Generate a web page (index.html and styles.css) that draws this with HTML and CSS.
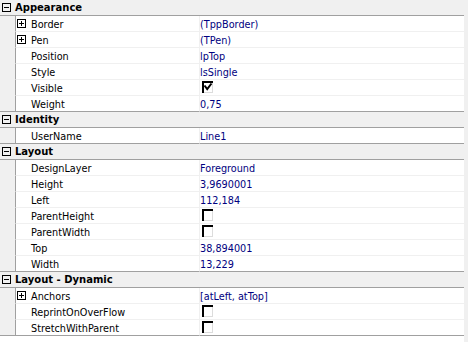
FILE: index.html
```html
<!DOCTYPE html>
<html>

<head>
    <title>Object Inspector</title>
    <link rel="stylesheet" href="styles.css">
</head>

<body>
    <div class="inspector">
        <div class="grid">
            <div class="category">
                <span class="toggle"><svg width="9" height="9"><rect x="0.5" y="0.5" width="8" height="8" fill="none" stroke="#000"/><path d="M2 4.5h5" stroke="#000"/></svg></span>
                Appearance
            </div>
            <div class="prop">
                <div class="gutter"></div>
                <div class="name"><span class="exp"><svg width="9" height="9"><rect x="0.5" y="0.5" width="8" height="8" fill="none" stroke="#000"/><path d="M2 4.5h5M4.5 2v5" stroke="#000"/></svg></span>Border</div>
                <div class="value">(TppBorder)</div>
            </div>
            <div class="prop">
                <div class="gutter"></div>
                <div class="name"><span class="exp"><svg width="9" height="9"><rect x="0.5" y="0.5" width="8" height="8" fill="none" stroke="#000"/><path d="M2 4.5h5M4.5 2v5" stroke="#000"/></svg></span>Pen</div>
                <div class="value">(TPen)</div>
            </div>
            <div class="prop">
                <div class="gutter"></div>
                <div class="name"><span class="exp"></span>Position</div>
                <div class="value">lpTop</div>
            </div>
            <div class="prop">
                <div class="gutter"></div>
                <div class="name"><span class="exp"></span>Style</div>
                <div class="value">lsSingle</div>
            </div>
            <div class="prop">
                <div class="gutter"></div>
                <div class="name"><span class="exp"></span>Visible</div>
                <div class="value"><svg class="check" width="11" height="12"><rect width="11" height="2"/><rect width="2" height="12"/><rect x="10" y="2" width="1" height="10" fill="#dcdcdc"/><rect x="2" y="11" width="9" height="1" fill="#dcdcdc"/><polyline points="2.5,4.5 5.2,8 9.5,2.5" fill="none" stroke="#000" stroke-width="2"/></svg></div>
            </div>
            <div class="prop last">
                <div class="gutter"></div>
                <div class="name"><span class="exp"></span>Weight</div>
                <div class="value">0,75</div>
            </div>

            <div class="category">
                <span class="toggle"><svg width="9" height="9"><rect x="0.5" y="0.5" width="8" height="8" fill="none" stroke="#000"/><path d="M2 4.5h5" stroke="#000"/></svg></span>
                Identity
            </div>
            <div class="prop last">
                <div class="gutter"></div>
                <div class="name"><span class="exp"></span>UserName</div>
                <div class="value">Line1</div>
            </div>

            <div class="category">
                <span class="toggle"><svg width="9" height="9"><rect x="0.5" y="0.5" width="8" height="8" fill="none" stroke="#000"/><path d="M2 4.5h5" stroke="#000"/></svg></span>
                Layout
            </div>
            <div class="prop">
                <div class="gutter"></div>
                <div class="name"><span class="exp"></span>DesignLayer</div>
                <div class="value">Foreground</div>
            </div>
            <div class="prop">
                <div class="gutter"></div>
                <div class="name"><span class="exp"></span>Height</div>
                <div class="value">3,9690001</div>
            </div>
            <div class="prop">
                <div class="gutter"></div>
                <div class="name"><span class="exp"></span>Left</div>
                <div class="value">112,184</div>
            </div>
            <div class="prop">
                <div class="gutter"></div>
                <div class="name"><span class="exp"></span>ParentHeight</div>
                <div class="value"><svg class="check" width="11" height="12"><rect width="11" height="2"/><rect width="2" height="12"/><rect x="10" y="2" width="1" height="10" fill="#dcdcdc"/><rect x="2" y="11" width="9" height="1" fill="#dcdcdc"/></svg></div>
            </div>
            <div class="prop">
                <div class="gutter"></div>
                <div class="name"><span class="exp"></span>ParentWidth</div>
                <div class="value"><svg class="check" width="11" height="12"><rect width="11" height="2"/><rect width="2" height="12"/><rect x="10" y="2" width="1" height="10" fill="#dcdcdc"/><rect x="2" y="11" width="9" height="1" fill="#dcdcdc"/></svg></div>
            </div>
            <div class="prop">
                <div class="gutter"></div>
                <div class="name"><span class="exp"></span>Top</div>
                <div class="value">38,894001</div>
            </div>
            <div class="prop last">
                <div class="gutter"></div>
                <div class="name"><span class="exp"></span>Width</div>
                <div class="value">13,229</div>
            </div>

            <div class="category">
                <span class="toggle"><svg width="9" height="9"><rect x="0.5" y="0.5" width="8" height="8" fill="none" stroke="#000"/><path d="M2 4.5h5" stroke="#000"/></svg></span>
                Layout - Dynamic
            </div>
            <div class="prop">
                <div class="gutter"></div>
                <div class="name"><span class="exp"><svg width="9" height="9"><rect x="0.5" y="0.5" width="8" height="8" fill="none" stroke="#000"/><path d="M2 4.5h5M4.5 2v5" stroke="#000"/></svg></span>Anchors</div>
                <div class="value">[atLeft, atTop]</div>
            </div>
            <div class="prop">
                <div class="gutter"></div>
                <div class="name"><span class="exp"></span>ReprintOnOverFlow</div>
                <div class="value"><svg class="check" width="11" height="12"><rect width="11" height="2"/><rect width="2" height="12"/><rect x="10" y="2" width="1" height="10" fill="#dcdcdc"/><rect x="2" y="11" width="9" height="1" fill="#dcdcdc"/></svg></div>
            </div>
            <div class="prop last">
                <div class="gutter"></div>
                <div class="name"><span class="exp"></span>StretchWithParent</div>
                <div class="value"><svg class="check" width="11" height="12"><rect width="11" height="2"/><rect width="2" height="12"/><rect x="10" y="2" width="1" height="10" fill="#dcdcdc"/><rect x="2" y="11" width="9" height="1" fill="#dcdcdc"/></svg></div>
            </div>
        </div>
        <div class="scroll-edge"></div>
    </div>
</body>

</html>
```

FILE: styles.css
```css
body {
    margin: 0;
    font-family: "DejaVu Sans", Verdana, sans-serif;
    font-size: 9.7px;
    background-color: #ffffff;
}

.inspector {
    display: flex;
    height: 342px;
}

.grid {
    width: 464px;
}

.scroll-edge {
    width: 4px;
    background-color: #f0f0f0;
}

.category {
    display: flex;
    height: 15px;
    line-height: 15px;
    background-color: #f0f0f0;
    border-bottom: 1px solid #a0a0a0;
    font-size: 10px;
    font-weight: bold;
    color: #000000;
}

.toggle {
    flex: none;
    width: 15px;
}

.toggle svg {
    display: block;
    margin: 3px 0 0 2px;
}

.prop {
    display: grid;
    grid-template-columns: 16px 184px 1fr;
    height: 16px;
}

.gutter {
    background-color: #f0f0f0;
    border-right: 1px solid #a0a0a0;
    border-bottom: 1px solid #f0f0f0;
}

.name,
.value {
    height: 15px;
    line-height: 17px;
    border-bottom: 1px solid #f0f0f0;
    white-space: nowrap;
}

.name {
    display: flex;
    border-right: 1px solid #f0f0f0;
    color: #000000;
}

.value {
    color: #000080;
}

.prop.last .gutter,
.prop.last .name,
.prop.last .value {
    border-bottom-color: #a0a0a0;
}

.exp {
    flex: none;
    width: 15px;
}

.exp svg {
    display: block;
    margin: 3px 0 0 1px;
}

.check {
    display: block;
    margin: 1px 0 0 2px;
}
```
